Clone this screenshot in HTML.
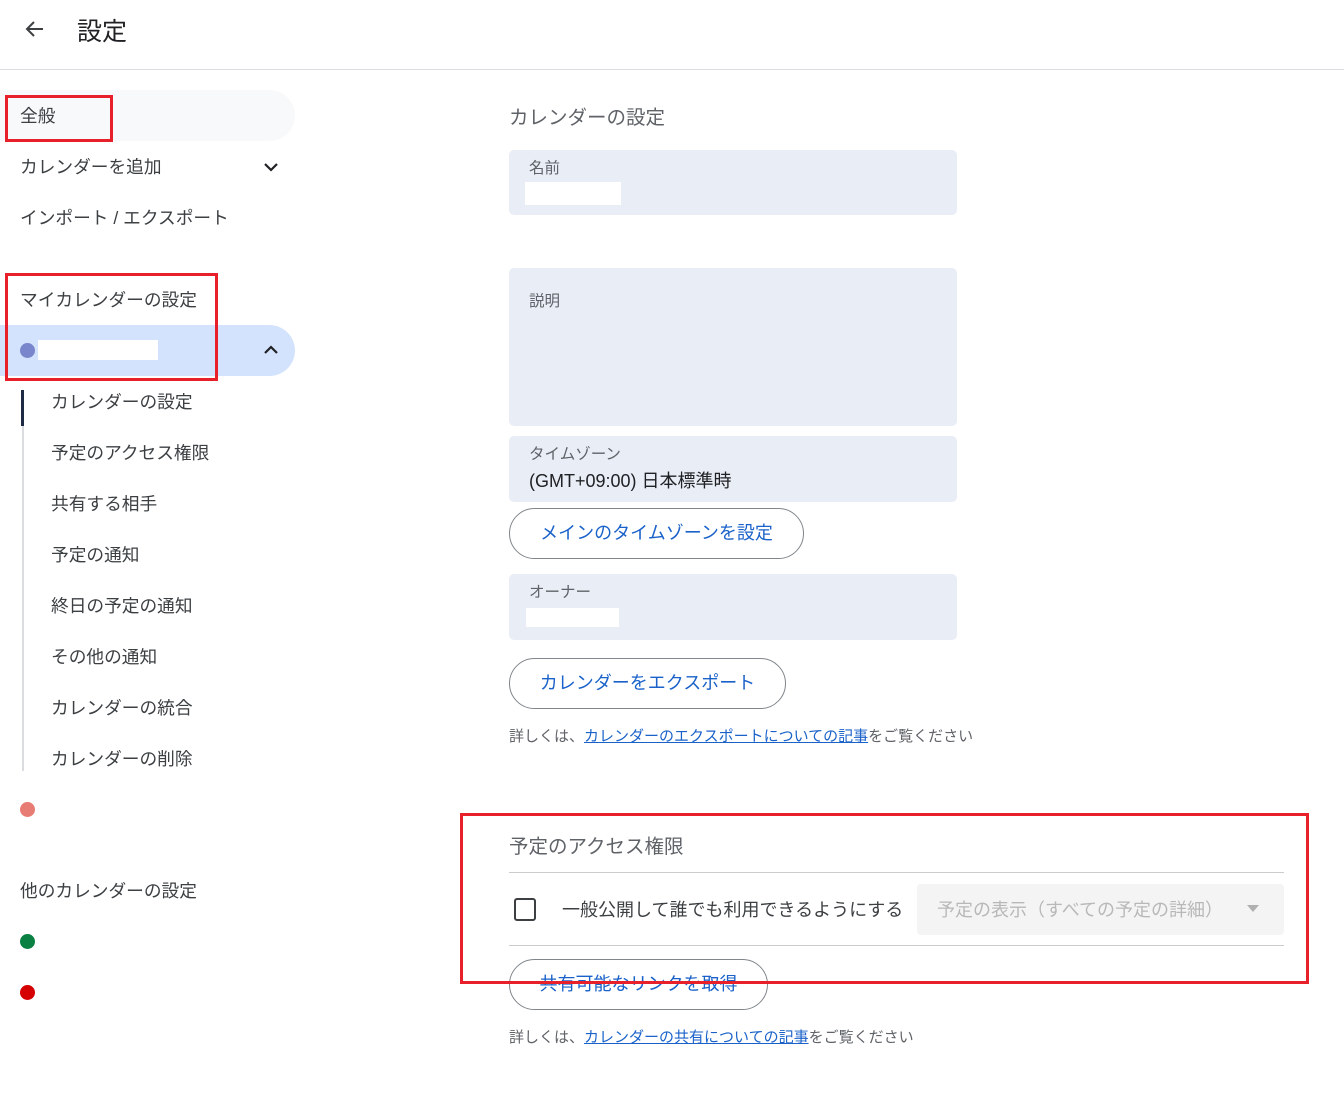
<!DOCTYPE html>
<html><head><meta charset="utf-8"><style>
*{margin:0;padding:0;box-sizing:border-box}
body{width:1344px;height:1095px;background:#fff;position:relative;overflow:hidden;font-family:"Liberation Sans","Noto Sans CJK JP",sans-serif;color:#3c4043}
.a{position:absolute;white-space:nowrap}
.s{font-size:17.7px;color:#3c4043}
.f{position:absolute;left:509px;width:448px;background:#e9edf6;border-radius:5px}
.lbl{position:absolute;left:20px;font-size:15.5px;color:#5f6368}
.btn{position:absolute;left:509px;height:51px;border:1px solid #80868b;border-radius:26px;color:#1a62c9;font-size:18px;text-align:center;line-height:48px}
.red{position:absolute;border:3px solid #e8202a}
.dot{position:absolute;width:15px;height:15px;border-radius:50%}
a{color:#1a62c9;text-decoration:underline}
</style></head><body>
<svg class="a" style="left:23px;top:17px" width="24" height="24" viewBox="0 0 24 24"><path d="M20 12H5M11 5l-7 7 7 7" stroke="#3c4043" stroke-width="2" fill="none"/></svg>
<div class="a" style="left:77px;top:12px;font-size:25px;color:#202124">設定</div>
<div class="a" style="left:0;top:69px;width:1344px;height:1px;background:#dadce0"></div>

<div class="a" style="left:0;top:90px;width:295px;height:51px;background:#f8f9fb;border-radius:0 26px 26px 0"></div>
<div class="a s" style="left:20px;top:102px">全般</div>
<div class="a s" style="left:20px;top:153px">カレンダーを追加</div>
<svg class="a" style="left:263px;top:160px" width="16" height="14" viewBox="0 0 16 14"><path d="M2 4l6 6 6-6" stroke="#202124" stroke-width="2.2" fill="none"/></svg>
<div class="a s" style="left:20px;top:204px">インポート / エクスポート</div>
<div class="a s" style="left:20px;top:286px">マイカレンダーの設定</div>
<div class="a" style="left:0;top:325px;width:295px;height:51px;background:#d3e3fd;border-radius:0 26px 26px 0"></div>
<div class="dot" style="left:20px;top:343px;background:#7986cb"></div>
<div class="a" style="left:38px;top:340px;width:120px;height:20px;background:#fff"></div>
<svg class="a" style="left:263px;top:343px" width="16" height="14" viewBox="0 0 16 14"><path d="M2 10l6-6 6 6" stroke="#202124" stroke-width="2.2" fill="none"/></svg>
<div class="a" style="left:22px;top:390px;width:2px;height:381px;background:#dadce0"></div>
<div class="a" style="left:21px;top:390px;width:3px;height:36px;background:#1f2a44"></div>
<div class="a s" style="left:51px;top:388px">カレンダーの設定</div>
<div class="a s" style="left:51px;top:439px">予定のアクセス権限</div>
<div class="a s" style="left:51px;top:490px">共有する相手</div>
<div class="a s" style="left:51px;top:541px">予定の通知</div>
<div class="a s" style="left:51px;top:592px">終日の予定の通知</div>
<div class="a s" style="left:51px;top:643px">その他の通知</div>
<div class="a s" style="left:51px;top:694px">カレンダーの統合</div>
<div class="a s" style="left:51px;top:745px">カレンダーの削除</div>
<div class="dot" style="left:20px;top:802px;background:#e67c73"></div>
<div class="a s" style="left:20px;top:877px">他のカレンダーの設定</div>
<div class="dot" style="left:20px;top:934px;background:#0b8043"></div>
<div class="dot" style="left:20px;top:985px;background:#d50000"></div>

<div class="a" style="left:509px;top:101px;font-size:19.5px;color:#5f6368">カレンダーの設定</div>
<div class="f" style="top:150px;height:65px"><div class="lbl" style="top:6px">名前</div><div class="a" style="left:16px;top:32px;width:96px;height:23px;background:#fff"></div></div>
<div class="f" style="top:268px;height:158px"><div class="lbl" style="top:21px">説明</div></div>
<div class="f" style="top:436px;height:66px"><div class="lbl" style="top:6px">タイムゾーン</div><div class="a" style="left:20px;top:31px;font-size:18px;color:#202124">(GMT+09:00) 日本標準時</div></div>
<div class="btn" style="top:508px;width:295px">メインのタイムゾーンを設定</div>
<div class="f" style="top:574px;height:66px"><div class="lbl" style="top:6px">オーナー</div><div class="a" style="left:17px;top:34px;width:93px;height:19px;background:#fff"></div></div>
<div class="btn" style="top:658px;width:277px">カレンダーをエクスポート</div>
<div class="a" style="left:509px;top:725px;font-size:15px;color:#5f6368">詳しくは、<a>カレンダーのエクスポートについての記事</a>をご覧ください</div>

<div class="a" style="left:509px;top:830px;font-size:19.5px;color:#5f6368">予定のアクセス権限</div>
<div class="a" style="left:509px;top:872px;width:775px;height:1px;background:#ccc"></div>
<div class="a" style="left:514px;top:898px;width:22px;height:23px;border:2px solid #3c4043;border-radius:3px"></div>
<div class="a" style="left:562px;top:896px;font-size:18px;color:#3c4043">一般公開して誰でも利用できるようにする</div>
<div class="a" style="left:917px;top:884px;width:367px;height:51px;background:#f4f4f4;border-radius:4px"><div class="a" style="left:20px;top:12px;font-size:18px;color:#b8b8b8">予定の表示（すべての予定の詳細）</div><div class="a" style="left:330px;top:21px;border-left:6px solid transparent;border-right:6px solid transparent;border-top:7px solid #b0b0b0"></div></div>
<div class="a" style="left:509px;top:945px;width:775px;height:1px;background:#ccc"></div>
<div class="btn" style="top:959px;width:259px">共有可能なリンクを取得</div>
<div class="a" style="left:509px;top:1026px;font-size:15px;color:#5f6368">詳しくは、<a>カレンダーの共有についての記事</a>をご覧ください</div>

<div class="red" style="left:5px;top:95px;width:108px;height:47px"></div>
<div class="red" style="left:5px;top:273px;width:213px;height:108px"></div>
<div class="red" style="left:460px;top:813px;width:849px;height:171px"></div>
</body></html>
